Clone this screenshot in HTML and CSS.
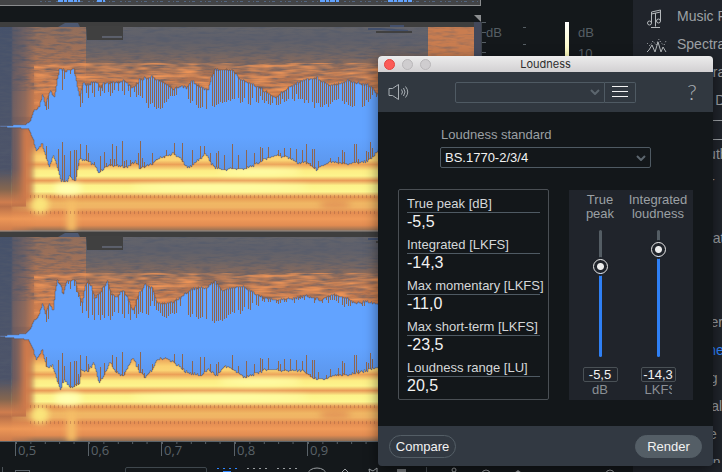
FILE: index.html
```html
<!DOCTYPE html>
<html lang="en">
<head>
  <meta charset="UTF-8" />
  <meta name="viewport" content="width=device-width, initial-scale=1.0" />
  <title>Loudness</title>
  <link rel="stylesheet" href="styles.css">
</head>
<body>
  <div class="app">
    <main class="workspace">
      <div class="editor">
        <div class="tracks">
          <div class="overview">
            <svg width="480" height="2" viewBox="0 0 480 2"><path d="M40 1.500H480" stroke="#52657f" stroke-dasharray="2 3 1 2 3 5"/><path d="M58 1H80M97 1H105M320 1H340M388 1H412" stroke="#62a3ff" stroke-width="2" stroke-dasharray="5 1 3 1"/></svg>
          </div>
          <div class="marker-row"><span class="marker"></span></div>
          <svg class="track" viewBox="0 0 481 210" preserveAspectRatio="none">
            <defs>
              <linearGradient id="spectrum" x1="0" y1="0" x2="0" y2="210" gradientUnits="userSpaceOnUse">
                <stop offset="0" stop-color="#67666a"/>
                <stop offset=".08" stop-color="#5e606b"/>
                <stop offset=".14" stop-color="#6d6566"/>
                <stop offset=".2" stop-color="#8b6b5c"/>
                <stop offset=".26" stop-color="#b27350"/>
                <stop offset=".36" stop-color="#cd7c4c"/>
                <stop offset=".5" stop-color="#be7148"/>
                <stop offset=".59" stop-color="#e38e4f"/>
                <stop offset=".64" stop-color="#fbd070"/>
                <stop offset=".66" stop-color="#fbd474"/>
                <stop offset=".68" stop-color="#eba057"/>
                <stop offset=".71" stop-color="#fdee85"/>
                <stop offset=".735" stop-color="#fdf48d"/>
                <stop offset=".757" stop-color="#e99b57"/>
                <stop offset=".78" stop-color="#fdf28a"/>
                <stop offset=".81" stop-color="#fdf792"/>
                <stop offset=".835" stop-color="#e59551"/>
                <stop offset=".865" stop-color="#f0b764"/>
                <stop offset=".885" stop-color="#f0b464"/>
                <stop offset=".91" stop-color="#e38c51"/>
                <stop offset=".94" stop-color="#f09a59"/>
                <stop offset=".97" stop-color="#e28c52"/>
                <stop offset="1" stop-color="#856a55"/>
              </linearGradient>
              <linearGradient id="quiet" x1="0" y1="0" x2="0" y2="210" gradientUnits="userSpaceOnUse">
                <stop offset="0" stop-color="#45516a"/>
                <stop offset=".5" stop-color="#4c546a"/>
                <stop offset=".7" stop-color="#4b5268"/>
                <stop offset=".8" stop-color="#85664f"/>
                <stop offset=".86" stop-color="#cf7d4e"/>
                <stop offset=".88" stop-color="#b97049"/>
                <stop offset=".94" stop-color="#ec9656"/>
                <stop offset="1" stop-color="#c9794b"/>
              </linearGradient>
              <linearGradient id="fade" x1="0" x2="1" y1="0" y2="0">
                <stop offset="0" stop-color="#fff"/>
                <stop offset=".3" stop-color="#fff"/>
                <stop offset=".36" stop-color="#bbb"/>
                <stop offset=".7" stop-color="#777"/>
                <stop offset="1" stop-color="#000"/>
              </linearGradient>
              <linearGradient id="attack" x1="0" x2="0" y1="0" y2="1">
                <stop offset="0" stop-color="#9a7058"/>
                <stop offset=".5" stop-color="#bd7851"/>
                <stop offset="1" stop-color="#d9824d"/>
              </linearGradient>
              <linearGradient id="wave" x1="0" y1="50" x2="0" y2="160" gradientUnits="userSpaceOnUse">
                <stop offset="0" stop-color="#62a3ff"/>
                <stop offset=".6" stop-color="#62a3ff"/>
                <stop offset="1" stop-color="#5990e2"/>
              </linearGradient>
              <filter id="grain" x="0" y="0" width="1" height="1" color-interpolation-filters="sRGB">
                <feTurbulence type="fractalNoise" baseFrequency=".07 .4" numOctaves="3" seed="4"/>
                <feColorMatrix values="0 0 0 0 .32  0 0 0 0 .35  0 0 0 0 .42  1.500 0 0 0 -.6"/>
              </filter>
              <filter id="glow" x="0" y="0" width="1" height="1" color-interpolation-filters="sRGB">
                <feTurbulence type="fractalNoise" baseFrequency=".04 .3" numOctaves="2" seed="9"/>
                <feColorMatrix values="0 0 0 0 .93  0 0 0 0 .58  0 0 0 0 .34  2.400 0 0 0 -.9"/>
              </filter>
              <filter id="soft" x="-.2" y="-.2" width="1.400" height="1.400" color-interpolation-filters="sRGB"><feGaussianBlur stdDeviation="3"/></filter>
              <mask id="onset"><rect width="36" height="210" fill="url(#fade)"/></mask>
              <g id="spectrogram">
                <rect width="481" height="210" fill="url(#spectrum)"/>
                <rect x="12" y="100" width="14" height="85" fill="#c5764b"/>
                <rect x="12" width="74" height="95" fill="url(#attack)" opacity=".8"/>
                <rect x="428" y="5" width="46" height="60" fill="#c97d50"/>
                <rect x="12" y="5" width="416" height="64" filter="url(#grain)"/>
                <rect x="428" y="5" width="46" height="30" filter="url(#grain)" opacity=".5"/>
                <rect x="34" y="42" width="446" height="62" filter="url(#glow)"/>
                <rect width="36" height="210" fill="url(#quiet)" mask="url(#onset)"/>
                <rect y="5" width="12" height="150" filter="url(#grain)"/>
                <g filter="url(#soft)">
                  <rect x="22" y="105" width="10" height="75" fill="#d27b4b"/>
                  <ellipse cx="68" cy="167" rx="14" ry="6" fill="#ffffb4"/>
                  <ellipse cx="40" cy="183" rx="9" ry="9" fill="#fae57b"/>
                  <rect x="67" y="180" width="9" height="30" fill="#f6bf67"/>
                  <ellipse cx="260" cy="150" rx="42" ry="3" fill="#ffffae"/>
                  <ellipse cx="220" cy="166" rx="90" ry="3" fill="#ffffae"/>
                  <ellipse cx="335" cy="183" rx="16" ry="3" fill="#de8a52"/>
                </g>
                <path d="M30 175H480M30 191H480" stroke="#9c5942" stroke-opacity=".4" stroke-width="3" stroke-dasharray="1 3"/>
                <rect width="481" height="5" fill="#3e3e3e"/>
                <path d="M86 4H123V18H87Z" fill="#404040"/>
                <path d="M102 15H122" stroke="#5c606c" stroke-width="2"/>
                <path d="M58 5L65 1H78L80 5Z" fill="#4d5870"/>
                <path d="M368 7H380L408 9M390 4H404" stroke="#43506c" stroke-width="2" fill="none"/>
                <path d="M376 10H412" stroke="#404040" stroke-width="2"/>
                <rect x="474" width="7" height="210" fill="#43485a"/>
              </g>
            </defs>
            <use href="#spectrogram"/>
            <g id="wave-left"></g>
            <path d="M0 209.500H481" stroke="#8f8f8f"/>
          </svg>
          <svg class="track" viewBox="0 0 481 210" preserveAspectRatio="none">
            <use href="#spectrogram"/>
            <g id="wave-right"></g>
          </svg>
        </div>
        <div class="scale">
          <span class="tick"></span><span class="scale-label">dB</span>
        </div>
        <div class="scale-dots"></div>
        <div class="legend"></div>
        <div class="legend-labels"><span>dB</span><span>10</span></div>
      </div>
      <div class="ruler">
        <span>0,5</span><span>0,6</span><span>0,7</span><span>0,8</span><span>0,9</span>
      </div>
      <div class="tools">
        <span class="divider"></span>
        <button class="tool tool-box" aria-label="Grid"></button>
        <select class="tool-select" aria-label="Zoom"><option></option></select>
        <div class="tool-group">
          <button class="tool active" aria-label="Time selection"><svg width="20" height="20"><path d="M0 1.500H20" stroke="currentColor" stroke-dasharray="2 4"/><rect x="6" y="4" width="8" height="14" fill="currentColor"/></svg></button>
          <button class="tool" aria-label="Box selection"><svg width="20" height="20"><path d="M0 1.500H20" stroke="currentColor" stroke-dasharray="2 4"/></svg></button>
          <button class="tool" aria-label="Frequency selection"><svg width="20" height="20"><path d="M0 1.500H20" stroke="currentColor" stroke-dasharray="2 4"/></svg></button>
          <button class="tool" aria-label="Lasso"><svg width="20" height="20"><ellipse cx="10" cy="7" rx="9" ry="6" fill="none" stroke="currentColor"/></svg></button>
        </div>
        <div class="tool-group tight">
          <button class="tool" aria-label="Brush"><svg width="20" height="20"><path d="M6 6L10 2L14 6L10 10Z" fill="none" stroke="currentColor"/></svg></button>
          <button class="tool" aria-label="Wand"><svg width="20" height="20"><path d="M6 2L10 4L14 1V8H7Z" fill="none" stroke="currentColor"/></svg></button>
          <button class="tool" aria-label="Stop"><svg width="20" height="20"><rect x="6" y="2" width="9" height="9" fill="#777b7f"/></svg></button>
        </div>
        <span class="divider"></span>
        <button class="tool" aria-label="Marker"><svg width="20" height="20"><circle cx="10" cy="3" r="2" fill="none" stroke="currentColor"/><path d="M10 5V20" stroke="currentColor"/></svg></button>
        <button class="tool" aria-label="Zoom in"><svg width="20" height="20"><circle cx="10" cy="7" r="4" fill="none" stroke="currentColor"/></svg></button>
        <button class="tool" aria-label="Hand"><svg width="20" height="20"><path d="M6 6L10 3L14 6V12H6Z" fill="currentColor"/></svg></button>
        <button class="tool last" aria-label="Zoom out"><svg width="20" height="20"><circle cx="10" cy="7" r="4" fill="none" stroke="currentColor"/></svg></button>
      </div>
    </main>

    <aside class="modules">
      <ul class="module-list">
        <li><a href="#"><svg class="module-icon" viewBox="0 0 22 20"><path d="M5.500 14V3L14.500 1V12M5.500 5L14.500 3M9.500 4V17.500M5 18.500H14"/><circle cx="3.500" cy="14" r="2"/><circle cx="12.500" cy="12" r="2"/></svg>Music Rebalance</a></li>
        <li><a href="#"><svg class="module-icon" viewBox="0 0 22 20"><path d="M1 15L3 13L6 8L9 15L12 5L15 15L17 10L20 15"/><path d="M1 6L4 9L7 4L10 8L13 2L15 6L18 8L20 4" stroke-dasharray="1 2"/></svg>Spectral De-noise</a></li>
        <li><a href="#">Spectral Repair</a></li>
        <li><a href="#">Voice De-noise</a></li>
      </ul>
      <h2 class="module-heading">Utility</h2>
      <ul class="module-list">
        <li><a href="#">Azimuth</a></li>
        <li><a href="#">Dither</a></li>
        <li><a href="#">EQ</a></li>
        <li><a href="#">EQ Match</a></li>
        <li><a href="#">Fade</a></li>
        <li><a href="#">Gain</a></li>
        <li><a href="#">Leveler</a></li>
        <li><a class="current" href="#">Loudness</a></li>
        <li><a href="#">Mixing</a></li>
        <li><a href="#">Normalize</a></li>
        <li><a href="#">Phase</a></li>
        <li><a href="#">Plug-in</a></li>
      </ul>
    </aside>

    <section class="dialog" role="dialog" aria-labelledby="dialog-title">
      <header class="titlebar">
        <div class="lights">
          <button class="light close" aria-label="Close"></button>
          <button class="light" aria-label="Minimize"></button>
          <button class="light" aria-label="Zoom"></button>
        </div>
        <h1 id="dialog-title">Loudness</h1>
      </header>

      <div class="dialog-toolbar">
        <button class="icon-button" aria-label="Preview">
          <svg width="22" height="18" viewBox="0 0 22 18"><path d="M1 5.500H4.500L10.500 1.500V16.500L4.500 12.500H1Z"/><path d="M13.500 6.500Q15.500 9 13.500 11.500M15.500 5Q18.500 9 15.500 13M17.500 3.500Q22 9 17.500 14.500"/></svg>
        </button>
        <div class="preset">
          <select class="dropdown" aria-label="Preset"><option></option></select>
          <button class="menu-button" aria-label="Preset menu">
            <svg width="16" height="12" viewBox="0 0 16 12"><path d="M0 .5H16M0 5.500H16M0 10.500H16"/></svg>
          </button>
        </div>
        <button class="icon-button help" aria-label="Help">?</button>
      </div>

      <div class="dialog-body">
        <div class="standard">
          <label for="standard">Loudness standard</label>
          <select class="dropdown" id="standard"><option>BS.1770-2/3/4</option></select>
        </div>
        <div class="panels">
          <dl class="meters">
            <div><dt>True peak [dB]</dt><dd>-5,5</dd></div>
            <div><dt>Integrated [LKFS]</dt><dd>-14,3</dd></div>
            <div><dt>Max momentary [LKFS]</dt><dd>-11,0</dd></div>
            <div><dt>Max short-term [LKFS]</dt><dd>-23,5</dd></div>
            <div><dt>Loudness range [LU]</dt><dd>20,5</dd></div>
          </dl>
          <div class="levels">
            <div class="level">
              <label for="peak">True<br>peak</label>
              <input class="slider" id="peak" type="range" min="0" max="100" value="74" style="--value: 74%">
              <input class="level-value" type="text" value="-5,5" aria-label="True peak value">
              <span class="unit">dB</span>
            </div>
            <div class="level">
              <label for="integrated">Integrated<br>loudness</label>
              <input class="slider" id="integrated" type="range" min="0" max="100" value="89" style="--value: 89%">
              <input class="level-value" type="text" value="-14,3" aria-label="Integrated loudness value">
              <span class="unit">LKFS</span>
            </div>
          </div>
        </div>
      </div>

      <footer class="dialog-footer">
        <button class="pill outline">Compare</button>
        <button class="pill">Render</button>
      </footer>
    </section>
  </div>
  <script src="waveform.js"></script>
</body>
</html>
```
FILE: styles.css
```css
* {
  box-sizing: border-box;
}

body {
  margin: 0;
  background-color: #14181b;
  font-family: "Liberation Sans", Arial, sans-serif;
  font-size: 13px;
  color: #d5d7d9;
}

button,
input,
select {
  font-family: inherit;
  font-size: 13px;
  color: inherit;
  margin: 0;
  padding: 0;
}

button {
  border: none;
  background: none;
}

.app {
  position: relative;
  display: flex;
  height: 100vh;
  overflow: hidden;
}

/* editor */
.workspace {
  flex: 1;
  min-width: 0;
  display: flex;
  flex-direction: column;
}

.editor {
  flex: 1;
  min-height: 0;
  display: flex;
}

.tracks {
  flex: 1;
  min-width: 0;
  display: flex;
  flex-direction: column;
}

.overview {
  height: 6px;
  background-color: #434446;
  border-right: 1px solid #8a8c8e;
  border-bottom: 1px solid #8a8c8e;
  overflow: hidden;
}

.overview svg {
  display: block;
}

.marker-row {
  height: 16px;
  display: flex;
  justify-content: flex-end;
  align-items: flex-end;
}

.marker {
  border-top: 7px solid #8c8e90;
  border-left: 7px solid transparent;
}

.track {
  display: block;
  flex: 1;
  width: 100%;
  min-height: 0;
}

.scale {
  width: 42px;
  margin-top: 22px;
  border-left: 1px solid #3b4248;
  display: flex;
  align-items: flex-start;
  color: #565e64;
}

.tick {
  width: 4px;
  height: 33px;
  background: repeating-linear-gradient(#565e64 0 1px, transparent 1px 10px);
}

.scale-label {
  line-height: 21px;
}

.scale-dots {
  width: 42px;
  height: 20px;
  margin-top: 27px;
  background: repeating-linear-gradient(#565e64 0 1px, transparent 1px 17px) left / 3px 100% no-repeat;
}

.legend {
  width: 4px;
  margin-top: 22px;
  background: linear-gradient(#fff, #fdfbb0 40px, #f09a59);
}

.legend-labels {
  width: 64px;
  margin-top: 22px;
  padding-left: 9px;
  color: #565e64;
  line-height: 21px;
}

.legend-labels span {
  display: block;
}

.ruler {
  height: 26px;
  padding-left: 15px;
  display: flex;
  border-top: 1px solid #5a6268;
  color: #5a6268;
  font-family: "Open Sans", sans-serif;
  overflow: hidden;
}

.ruler span {
  flex: 0 0 73px;
  height: 14px;
  padding-left: 2px;
  line-height: 16px;
  border-left: 1px solid #5a6268;
  background: linear-gradient(90deg, #5a6268 1px, transparent 1px) 0 0 / 20% 2px repeat-x;
}

.tools {
  height: 5px;
  flex: none;
  display: flex;
  padding-left: 2px;
  color: #9a9ea1;
  overflow: hidden;
}

.tool {
  flex: none;
  width: 20px;
  height: 20px;
}

.tool svg {
  display: block;
}

.tool.active {
  color: #2f86ff;
}

.tool-box {
  width: 15px;
  margin: 3px 0 0 12px;
  border: 1px solid #5a6268;
}

.tool-select {
  flex: none;
  appearance: none;
  width: 82px;
  height: 20px;
  margin: 0 10px 0 95px;
  border: 1px solid #3f474d;
  border-radius: 2px;
  background: none;
}

.tool-group {
  display: flex;
  gap: 10px;
  margin-right: 8px;
}

.tool-group.tight {
  gap: 8px;
}

.divider {
  flex: none;
  width: 1px;
  height: 20px;
  background-color: #4c5359;
}

.divider ~ .divider {
  margin: 0 17px 0 7px;
}

.divider ~ .divider ~ .tool {
  margin-right: 12px;
}

.tool.last {
  margin-left: 60px;
}

/* module list */
.modules {
  width: 89px;
  padding-top: 2px;
  background-color: #20242b;
  border-bottom: 9px solid #20242b;
  overflow: hidden;
}

.module-list {
  margin: 0;
  padding: 0;
  list-style: none;
}

.module-list a {
  display: flex;
  padding-left: 44px;
  font-size: 14px;
  line-height: 28px;
  white-space: nowrap;
  text-decoration: none;
  color: #9da1a5;
}

.module-list a.current {
  color: #2f86ff;
}

.module-icon {
  flex: none;
  width: 22px;
  height: 20px;
  margin: 7px 9px 0 -31px;
  fill: none;
  stroke: #b4b8bb;
}

.module-heading {
  margin: 6px 0 0;
  padding-left: 12px;
  border-top: 1px solid #a0a4a8;
  border-bottom: 1px solid #a0a4a8;
  font-size: 13px;
  font-weight: normal;
  line-height: 18px;
}

/* floating window */
.dialog {
  position: absolute;
  top: 56px;
  right: 9px;
  width: 335px;
  border-radius: 4px;
  overflow: hidden;
  background-color: #13171a;
  box-shadow: 0 4px 14px rgba(0, 0, 0, 0.5);
}

.titlebar {
  display: flex;
  align-items: center;
  height: 16px;
  padding: 0 6px;
  background: linear-gradient(#ececec, #d2d0d2);
}

.lights {
  flex: 1;
  display: flex;
  gap: 7px;
}

.light {
  width: 11px;
  height: 11px;
  border: 1px solid #b9b7b9;
  border-radius: 50%;
  background-color: #cfcdcf;
}

.light.close {
  border-color: #e2463f;
  background-color: #fc5b57;
}

.titlebar h1 {
  margin: 0;
  font-family: Inter, sans-serif;
  font-size: 11px;
  font-weight: normal;
  line-height: 16px;
  color: #2e2e2e;
}

.titlebar::after {
  content: "";
  flex: 1;
}

.dialog-toolbar {
  display: flex;
  align-items: center;
  justify-content: space-between;
  height: 40px;
  padding: 0 10px;
  background-color: #313840;
}

.icon-button {
  width: 22px;
  height: 24px;
  color: #a9afb4;
}

.icon-button svg,
.menu-button svg {
  display: block;
  margin: auto;
  fill: none;
  stroke: currentColor;
}

.help {
  font-family: Lato, sans-serif;
  font-size: 22px;
  font-weight: 300;
  line-height: 24px;
}

.dropdown {
  appearance: none;
  height: 21px;
  padding: 0 20px 0 4px;
  border: 1px solid #4f5a63;
  border-radius: 2px;
  color: #f2f2f2;
  background: none;
  background-image: url("data:image/svg+xml,%3Csvg xmlns='http://www.w3.org/2000/svg' width='10' height='6'%3E%3Cpath d='M1 1l4 4 4-4' fill='none' stroke='%235c666e' stroke-width='2'/%3E%3C/svg%3E");
  background-repeat: no-repeat;
  background-position: right 4px center;
}

.preset {
  display: flex;
  width: 181px;
}

.preset .dropdown {
  flex: 1;
  border-radius: 2px 0 0 2px;
}

.menu-button {
  width: 31px;
  border: 1px solid #4f5a63;
  border-left: none;
  border-radius: 0 2px 2px 0;
  color: #f2f2f2;
}

.dialog-body {
  padding: 15px 20px 26px;
}

.standard {
  width: 211px;
  margin: 0 auto 21px;
}

.standard label {
  display: block;
  padding-left: 1px;
  margin-bottom: 4px;
  line-height: 16px;
  color: #9ba0a4;
}

.standard .dropdown {
  display: block;
  width: 100%;
}

.panels {
  display: flex;
  gap: 20px;
}

.meters {
  flex: 1;
  min-width: 0;
  display: flex;
  flex-direction: column;
  gap: 6px;
  margin: 0;
  padding: 6px 8px 4px;
  border: 1px solid #4a4f54;
  border-radius: 2px;
}

.meters dt {
  line-height: 16px;
  white-space: nowrap;
  border-bottom: 1px solid #4f5a63;
}

.meters dd {
  margin: 0;
  font-size: 16px;
  line-height: 18px;
  color: #f2f2f2;
}

.levels {
  display: flex;
  width: 124px;
  margin-top: 1px;
  padding: 3px 6px 0 2px;
  background-color: #20242b;
}

.level {
  flex: 1;
  min-width: 0;
  display: flex;
  flex-direction: column;
  align-items: center;
}

.level label {
  line-height: 14px;
  text-align: center;
  color: #9ba0a4;
}

.slider {
  appearance: none;
  writing-mode: vertical-lr;
  direction: rtl;
  width: 15px;
  height: 127px;
  margin: 9px 0 10px;
  background: none;
}

.slider::-webkit-slider-runnable-track {
  width: 3px;
  height: 100%;
  border-radius: 2px;
  background: linear-gradient(to top, #2f80f5 var(--value), #545d64 var(--value));
}

.slider::-webkit-slider-thumb {
  appearance: none;
  width: 15px;
  height: 15px;
  margin-left: -6px;
  border: 1px solid #e6e6e6;
  border-radius: 50%;
  background: radial-gradient(circle, #ececec 3px, #20242b 4px);
  box-shadow: 0 0 0 2px #20242b;
}

.level-value {
  width: 35px;
  height: 15px;
  border: 1px solid #4a5156;
  border-radius: 2px;
  background: none;
  text-align: center;
  color: #f2f2f2;
}

.unit {
  width: 27px;
  line-height: 15px;
  text-align: center;
  overflow: hidden;
  color: #8b9095;
}

.dialog-footer {
  display: flex;
  align-items: center;
  justify-content: space-between;
  height: 40px;
  padding: 0 11px;
  background-color: #323942;
}

.pill {
  width: 67px;
  height: 23px;
  border: 1px solid #545e66;
  border-radius: 12px;
  background-color: #545e66;
  color: #f2f2f2;
}

.pill.outline {
  background: none;
}
```
FILE: waveform.js
```js
// each list is x, y, x, y ... in track coordinates
const left = {
  top: [0,104,25,103,30,99,33,90,39,84,42,73,45,83,50,69,54,75,57,58,59,48,63,48,65,51,68,48,74,48,76,60,79,75,83,61,86,64,95,59,100,66,104,61,113,61,123,59,133,66,140,57,152,55,163,61,173,67,181,64,186,66,192,59,200,66,208,67,211,56,214,48,232,48,240,58,252,62,262,68,275,76,288,66,303,58,317,56,328,63,340,61,349,59,360,62,370,64,378,73,480,73],
  cut: [0,104,36,96,43,90,54,86,58,52,62,69,66,48,77,60,79,89,85,78,100,75,120,74,135,76,148,86,160,91,170,80,182,71,193,85,205,91,211,86,220,85,235,80,248,84,260,81,270,85,280,84,296,78,310,87,330,88,340,81,355,90,375,78,480,78],
  bottom: [0,105,28,107,33,118,36,130,42,122,45,134,49,144,53,134,57,145,61,159,67,159,69,154,75,159,79,137,85,138,93,143,99,151,104,146,110,143,120,145,128,145,135,140,140,147,150,143,160,136,173,132,180,137,187,146,195,141,205,132,213,145,222,148,235,147,245,147,255,143,265,137,275,134,287,135,298,142,305,140,316,148,328,141,345,142,360,141,370,138,378,129,480,129],
  rise: 119
};

const right = {
  top: [0,104,25,102,30,97,33,90,38,84,42,72,45,81,49,73,53,78,55,58,57,49,61,56,63,63,66,51,68,49,75,49,77,60,82,72,85,54,88,49,91,55,94,66,98,63,103,56,107,49,111,63,116,65,122,58,127,66,133,79,138,63,145,52,152,57,157,71,165,72,175,69,185,62,195,56,206,56,214,49,222,59,230,56,243,55,252,60,262,66,275,68,290,67,305,64,320,68,333,62,345,66,355,71,370,70,378,72,480,72],
  cut: [0,104,36,92,45,93,55,76,59,68,66,55,76,60,82,84,93,89,105,90,115,86,133,88,147,85,152,75,165,91,180,80,195,88,207,90,221,93,230,85,245,81,255,76,265,71,280,73,300,70,330,74,345,77,360,75,378,76,480,76],
  bottom: [0,105,28,108,33,118,36,129,42,118,46,135,52,134,56,146,60,157,64,147,70,156,79,151,81,138,88,140,93,131,99,151,105,141,110,130,115,140,122,145,133,126,138,139,145,146,153,136,157,128,165,126,175,132,185,140,200,144,208,138,216,144,225,134,233,138,245,146,255,142,265,138,290,139,303,139,313,147,323,148,335,144,350,143,365,139,378,136,480,136],
  rise: 120
};

function at(points, x) {
  for (let i = 0; i < points.length - 2; i += 2) {
    if (x <= points[i + 2]) {
      const t = (x - points[i]) / (points[i + 2] - points[i]);
      return points[i + 1] + t * (points[i + 3] - points[i + 1]);
    }
  }
  return points[points.length - 1];
}

function noise(n) {
  const v = Math.sin(n * 12.9898) * 43758.5453;
  return v - Math.floor(v);
}

function drawWave(id, wave) {
  let upper = 'M0 105';
  let lower = '';
  let cuts = '';
  for (let x = 0; x <= 480; x++) {
    const jag = x > 30 ? Math.round(noise(x) * 2) - 1 : 0;
    const top = Math.round(at(wave.top, x)) + jag;
    const bottom = Math.round(at(wave.bottom, x)) - jag;
    upper += `L${x} ${top}H${x + 1}`;
    lower = `L${x + 1} ${bottom}H${x}` + lower;

    if (x > 41 && x % 2 === 0 && noise(x + 7) > 0.25) {
      const end = Math.round(at(wave.cut, x) - noise(x + 3) * 7);
      if (end > top + 2) cuts += `M${x} ${top}H${x + 1}V${end}H${x}Z`;
    }
    if (x > 43 && x % 2 === 0 && noise(x + 31) > 0.5) {
      const start = Math.round(wave.rise + noise(x + 11) * 24);
      if (start < bottom) cuts += `M${x} ${start}H${x + 1}V${bottom}H${x}Z`;
    }
  }
  document.getElementById(id).innerHTML =
    `<path d="${upper}${lower}Z" fill="url(#wave)" stroke="#5a4a48" stroke-opacity=".45"/>` +
    `<path d="${cuts}" fill="#94603f" fill-opacity=".9" shape-rendering="crispEdges"/>`;
}

drawWave('wave-left', left);
drawWave('wave-right', right);
```
